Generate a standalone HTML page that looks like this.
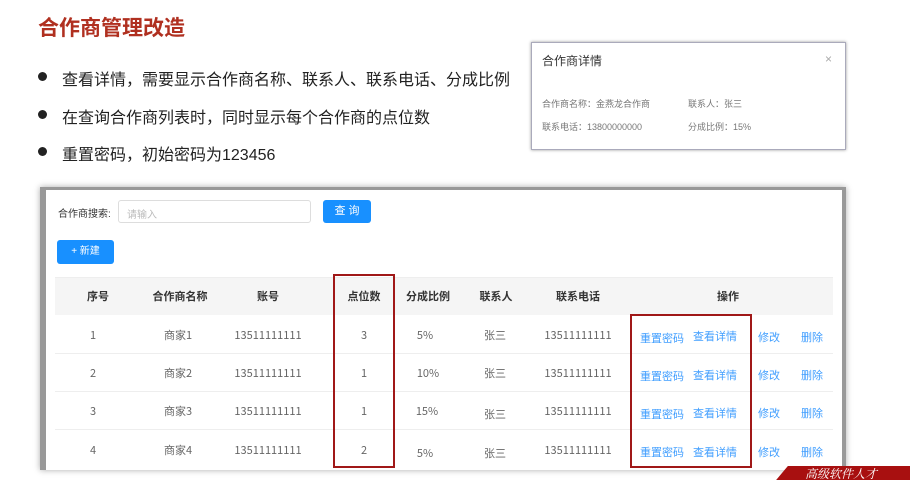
<!DOCTYPE html>
<html><head><meta charset="utf-8"><style>
*{margin:0;padding:0;box-sizing:border-box}
body{width:910px;height:477px;background:#fff;position:relative;overflow:hidden;font-family:"Liberation Sans","Noto Sans CJK SC",sans-serif;color:#333}
.a{position:absolute;white-space:nowrap}
.t,.h,.l{line-height:14px;font-family:"Noto Sans CJK SC",sans-serif}
.t{font-size:11px;color:#666;transform:translateX(-50%)}
.h{font-size:11px;color:#333;font-weight:bold;transform:translateX(-50%)}
.l{font-size:11px;color:#409eff;transform:translateX(-50%)}
.dot{position:absolute;width:9px;height:9px;border-radius:50%;background:#222}
.b{font-size:16px;color:#222}
</style></head><body>
<div class="a" style="left:38px;top:12px;font-size:21px;font-weight:bold;color:#b03020">合作商管理改造</div>
<div class="dot" style="left:38px;top:72px"></div><div class="a b" style="left:62px;top:66px">查看详情，需要显示合作商名称、联系人、联系电话、分成比例</div>
<div class="dot" style="left:38px;top:110px"></div><div class="a b" style="left:62px;top:104px">在查询合作商列表时，同时显示每个合作商的点位数</div>
<div class="dot" style="left:38px;top:147px"></div><div class="a b" style="left:62px;top:141px">重置密码，初始密码为123456</div>

<div class="a" style="left:531px;top:42px;width:315px;height:108px;background:#fff;border:1px solid #aab;box-shadow:0 0 3px #999"></div>
<div class="a" style="left:542px;top:52px;font-size:12px;color:#333">合作商详情</div>
<div class="a" style="left:825px;top:52px;font-size:12px;color:#aaa">×</div>
<div class="a" style="left:542px;top:97px;font-size:9px;color:#777">合作商名称：金燕龙合作商</div>
<div class="a" style="left:688px;top:97px;font-size:9px;color:#777">联系人：张三</div>
<div class="a" style="left:542px;top:120px;font-size:9px;color:#777">联系电话：13800000000</div>
<div class="a" style="left:688px;top:120px;font-size:9px;color:#777">分成比例：15%</div>

<div class="a" style="left:40px;top:187px;width:806px;height:283px;background:#999;box-shadow:0 0 6px #aaa"></div>
<div class="a" style="left:46px;top:190px;width:796px;height:280px;background:#fff"></div>
<div class="a" style="left:58px;top:205px;font-size:10px;color:#333">合作商搜索:</div>
<div class="a" style="left:118px;top:200px;width:193px;height:23px;border:1px solid #ddd;border-radius:3px"></div>
<div class="a" style="left:127px;top:206px;font-size:10px;color:#bbb">请输入</div>
<div class="a" style="left:323px;top:200px;width:48px;height:23px;background:#1890ff;border-radius:3px;color:#fff;font-size:11px;text-align:center;line-height:23px">查 询</div>
<div class="a" style="left:57px;top:240px;width:57px;height:24px;background:#1890ff;border-radius:3px;color:#fff;font-size:10px;text-align:center;line-height:24px">+ 新建</div>

<div class="a" style="left:55px;top:277px;width:778px;height:38px;background:#f5f5f5;border-top:1px solid #eee"></div>
<div class="a" style="left:55px;top:353px;width:778px;height:1px;background:#eee"></div>
<div class="a" style="left:55px;top:391px;width:778px;height:1px;background:#eee"></div>
<div class="a" style="left:55px;top:429px;width:778px;height:1px;background:#eee"></div>

<div class="a h" style="left:98px;top:289px">序号</div>
<div class="a h" style="left:180px;top:289px">合作商名称</div>
<div class="a h" style="left:268px;top:289px">账号</div>
<div class="a h" style="left:364px;top:289px">点位数</div>
<div class="a h" style="left:428px;top:289px">分成比例</div>
<div class="a h" style="left:496px;top:289px">联系人</div>
<div class="a h" style="left:578px;top:289px">联系电话</div>
<div class="a h" style="left:728px;top:289px">操作</div>

<div class="a t" style="left:93px;top:328px">1</div><div class="a t" style="left:178px;top:328px">商家1</div><div class="a t" style="left:268px;top:328px">13511111111</div><div class="a t" style="left:364px;top:328px">3</div><div class="a t" style="left:425px;top:328px">5%</div><div class="a t" style="left:495px;top:328px">张三</div><div class="a t" style="left:578px;top:328px">13511111111</div>
<div class="a t" style="left:93px;top:366px">2</div><div class="a t" style="left:178px;top:366px">商家2</div><div class="a t" style="left:268px;top:366px">13511111111</div><div class="a t" style="left:364px;top:366px">1</div><div class="a t" style="left:428px;top:366px">10%</div><div class="a t" style="left:495px;top:366px">张三</div><div class="a t" style="left:578px;top:366px">13511111111</div>
<div class="a t" style="left:93px;top:404px">3</div><div class="a t" style="left:178px;top:404px">商家3</div><div class="a t" style="left:268px;top:404px">13511111111</div><div class="a t" style="left:364px;top:404px">1</div><div class="a t" style="left:427px;top:404px">15%</div><div class="a t" style="left:495px;top:407px">张三</div><div class="a t" style="left:578px;top:404px">13511111111</div>
<div class="a t" style="left:93px;top:443px">4</div><div class="a t" style="left:178px;top:443px">商家4</div><div class="a t" style="left:268px;top:443px">13511111111</div><div class="a t" style="left:364px;top:443px">2</div><div class="a t" style="left:425px;top:446px">5%</div><div class="a t" style="left:495px;top:446px">张三</div><div class="a t" style="left:578px;top:443px">13511111111</div>

<div class="a l" style="left:662px;top:331px">重置密码</div><div class="a l" style="left:715px;top:329px">查看详情</div><div class="a l" style="left:769px;top:330px">修改</div><div class="a l" style="left:812px;top:330px">删除</div>
<div class="a l" style="left:662px;top:369px">重置密码</div><div class="a l" style="left:715px;top:368px">查看详情</div><div class="a l" style="left:769px;top:368px">修改</div><div class="a l" style="left:812px;top:368px">删除</div>
<div class="a l" style="left:662px;top:407px">重置密码</div><div class="a l" style="left:715px;top:406px">查看详情</div><div class="a l" style="left:769px;top:406px">修改</div><div class="a l" style="left:812px;top:406px">删除</div>
<div class="a l" style="left:662px;top:445px">重置密码</div><div class="a l" style="left:715px;top:445px">查看详情</div><div class="a l" style="left:769px;top:445px">修改</div><div class="a l" style="left:812px;top:445px">删除</div>

<div class="a" style="left:333px;top:274px;width:62px;height:194px;border:2px solid #a01818"></div>
<div class="a" style="left:630px;top:314px;width:122px;height:154px;border:2px solid #a01818"></div>

<div class="a" style="left:782px;top:466px;width:140px;height:14px;background:#a81010;transform:skewX(-40deg)"></div>
<div class="a" style="left:805px;top:465px;font-size:12px;color:#fff;font-style:italic;font-family:'Noto Serif CJK SC',serif">高级软件人才</div>
</body></html>
